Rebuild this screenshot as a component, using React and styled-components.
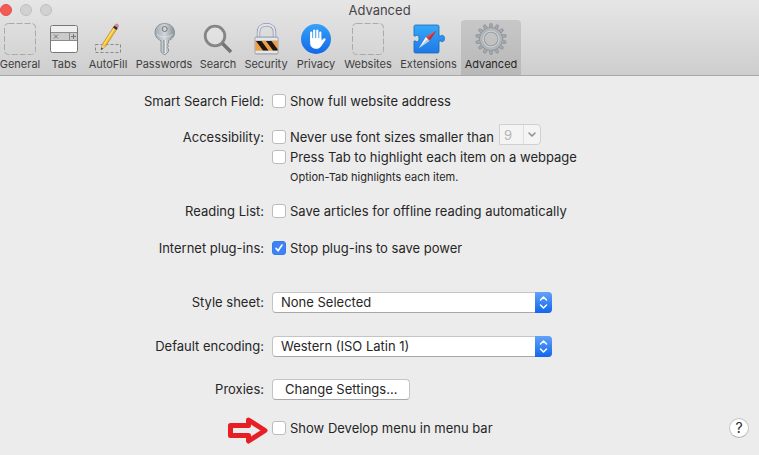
import React, { useState } from "react";
import styled, { createGlobalStyle, css } from "styled-components";

const GlobalStyle = createGlobalStyle`
  *, *::before, *::after { box-sizing: border-box; }
  body {
    margin: 0;
    background: #ececec;
    color: #262626;
    font: 13px/20px Inter, "Liberation Sans", sans-serif;
    overflow-x: hidden;
  }
  button, input, select { font: inherit; color: inherit; margin: 0; }
`;

const Window = styled.main`
  min-height: 100vh;
  background: #ececec;
`;

const Header = styled.header`
  background: linear-gradient(#e7e6e7, #cfcecf);
  border-bottom: 1px solid #a9a8a9;
`;

const TitleBar = styled.div`
  display: grid;
  grid-template-columns: 1fr auto 1fr;
  align-items: center;
  height: 20px;
`;

const Lights = styled.div`
  display: flex;
  gap: 8px;
`;

const Light = styled.button`
  width: 12px;
  height: 12px;
  padding: 0;
  border-radius: 50%;
  border: 1px solid ${(p) => (p.$close ? "#df5149" : "#c0bfc0")};
  background: ${(p) => (p.$close ? "#f25c54" : "#d2d1d2")};
`;

const Title = styled.h1`
  margin: 0;
  font-size: 13px;
  line-height: 20px;
  font-weight: 400;
  color: #464646;
`;

const Tabs = styled.nav`
  display: grid;
  grid-template-columns: 48px 40px 48px 64px 44px 52px 48px 56px 65px 60px;
  height: 55px;
  margin-left: -4px;
`;

const TabButton = styled.button`
  display: flex;
  flex-direction: column;
  align-items: center;
  gap: 1px;
  padding: 3px 0 0;
  border: 0;
  border-radius: 4px 4px 0 0;
  background: none;
  font-size: 11px;
  line-height: 16px;
  white-space: nowrap;
  color: #404040;
  svg { display: block; flex: none; }
  ${(p) =>
    p.$active &&
    css`
      background: linear-gradient(#c8c7c8, #b9b8b9);
      color: #262626;
    `}
`;

const Form = styled.form`
  display: flex;
  flex-direction: column;
  padding-top: 15px;
`;

const Row = styled.div`
  display: grid;
  grid-template-columns: minmax(0, 264fr) minmax(0, 487fr);
  column-gap: 8px;
  margin-bottom: ${(p) => p.$after || 0}px;
`;

const RowLabel = styled.label`
  text-align: right;
  white-space: nowrap;
  line-height: ${(p) => (p.$control ? 21 : 20)}px;
  padding-top: ${(p) => (p.$low ? 3 : 0)}px;
`;

const Stack = styled.div`
  display: flex;
  flex-direction: column;
  align-items: flex-start;
`;

const Line = styled.div`
  display: flex;
  align-items: flex-end;
  gap: 5px;
  height: 23px;
`;

const LastLine = styled.div`
  display: flex;
  justify-content: space-between;
  position: relative;
  padding-right: 10px;
`;

const CheckLabel = styled.label`
  display: flex;
  align-items: center;
  gap: 4px;
  height: 20px;
  white-space: nowrap;
`;

const CheckInput = styled.input`
  appearance: none;
  flex: none;
  width: 14px;
  height: 14px;
  border: 1px solid #bcbcbc;
  border-radius: 3px;
  background: #fff;
  &:checked {
    border-color: #3b7be8;
    background: #3e82f7
      url("data:image/svg+xml,%3Csvg xmlns='http://www.w3.org/2000/svg' viewBox='0 0 12 12'%3E%3Cpath d='M3 6.3 5.1 8.8 9 3' fill='none' stroke='white' stroke-width='1.6' stroke-linecap='round' stroke-linejoin='round'/%3E%3C/svg%3E")
      center / 12px no-repeat;
  }
`;

const Hint = styled.p`
  margin: 0 0 0 18px;
  font-size: 11px;
  line-height: 20px;
`;

const SelectBox = styled.div`
  position: relative;
  width: ${(p) => (p.$small ? 42 : 280)}px;
  height: 21px;
  align-self: flex-start;
  svg {
    position: absolute;
    top: 0;
    right: 0;
    pointer-events: none;
  }
`;

const Select = styled.select`
  appearance: none;
  display: block;
  width: 100%;
  height: 21px;
  padding: 0 24px 1px 8px;
  line-height: 18px;
  border: 1px solid #c4c4c4;
  border-bottom-color: #a8a8a8;
  border-radius: 4px;
  background: #fff;
  &:disabled {
    padding: 0 18px 0 4px;
    border-color: #d0d0d0;
    border-radius: 0 4px 4px 0;
    background: #f4f4f4;
    color: #b5b5b5;
    opacity: 1;
  }
`;

const PushButton = styled.button`
  height: 21px;
  padding: 0 12px 1px;
  line-height: 18px;
  border: 1px solid #c4c4c4;
  border-bottom-color: #a8a8a8;
  border-radius: 4px;
  background: #fff;
`;

const HelpButton = styled.button`
  width: 20px;
  height: 20px;
  padding: 0;
  border: 1px solid #c6c6c6;
  border-bottom-color: #adadad;
  border-radius: 50%;
  background: #fff;
  font-size: 14px;
  line-height: 18px;
`;

const Arrow = styled.svg`
  position: absolute;
  right: 100%;
  top: -1px;
  margin-right: 4px;
`;

const Icon = ({ children }) => (
  <svg width="34" height="32" viewBox="0 0 34 32" aria-hidden="true">
    {children}
  </svg>
);

const EmptyIcon = () => (
  <Icon>
    <rect x="1.5" y=".5" width="31" height="31" rx="4" fill="none" stroke="#aaa" strokeDasharray="6 2" />
  </Icon>
);

const TabsIcon = () => (
  <Icon>
    <rect x="3.5" y="2.5" width="27" height="27" rx="2" fill="#fff" stroke="#777" />
    <path d="M4 5a2 2 0 0 1 2-2h22a2 2 0 0 1 2 2v4H4z" fill="#efefef" />
    <path d="M4 9h26v8H4z" fill="#cbcacb" />
    <path d="M4 9.500h26M4 17.500h26M22.500 9v8" stroke="#8b8b8b" />
    <path d="m7 11.500 4 4m0-4-4 4M24 13.500h5M26.500 11v5" stroke="#777" />
  </Icon>
);

const PencilIcon = () => (
  <Icon>
    <path d="M4.500 21.500h25v8h-25z" fill="none" stroke="#888" strokeDasharray="3 2" />
    <path d="m10 27 1.200-5.500L22.500 4l3.200 2.200L14.500 23.500z" fill="#f5bd2c" stroke="#a77a22" strokeWidth=".6" />
    <path d="M12.800 21.500 23.500 5.200" stroke="#ffe17a" strokeWidth="1.200" />
    <path d="m10 27 1.200-5.500 3.300 2z" fill="#e8c99b" />
    <path d="m10 27 .5-2.500 1.500 1z" fill="#222" />
    <path d="m22 4.600 1.400-2.200 3.600 2.400-1.500 2.200z" fill="#33312f" />
    <path d="m23.400 2.400.8-1.200c1.400-1.600 4.400.4 3.600 2.300L27 4.800z" fill="#d98791" />
  </Icon>
);

const KeyIcon = () => (
  <Icon>
    <defs>
      <linearGradient id="key" x1="0" x2="1">
        <stop offset="0" stopColor="#a4abb0" />
        <stop offset=".5" stopColor="#d1d6d9" />
        <stop offset="1" stopColor="#899197" />
      </linearGradient>
    </defs>
    <path
      d="M17.500.5C11.700.5 8 4.400 8 9.500c0 3.900 2.200 6.600 6 8.200V29l3 2.500h1.500l3-3V26l-1.200-1.300 1.200-1.400-1-1.800 1-1.500v-2.400c3.800-1.600 6-4.300 6-8.100C27.500 4.400 23.400.5 17.500.5Z"
      fill="url(#key)"
      stroke="#7f878c"
      strokeWidth=".8"
    />
    <circle cx="17.700" cy="6" r="2.500" fill="#d4d4d4" stroke="#71797e" />
    <path d="M17 17v13" stroke="#737c82" />
    <path d="M18.300 17v13" stroke="#edf0f1" />
    <path d="M10 11c2 4 13 4 15.500 0" fill="none" stroke="#e1e5e7" strokeWidth=".8" />
  </Icon>
);

const SearchIcon = () => (
  <Icon>
    <circle cx="14" cy="13" r="9.800" fill="#e4e4e4" fillOpacity=".6" stroke="#858585" strokeWidth="2.800" />
    <path d="m21.500 20.500 8.500 8.500" stroke="#757575" strokeWidth="3.600" />
  </Icon>
);

const LockIcon = () => (
  <Icon>
    <path d="M9.500 14.500V9c0-5 3.500-7.300 8-7.300s8 2.300 8 7.300v5.500" fill="none" stroke="#8d95a3" strokeWidth="3.400" />
    <path d="M9.500 14.500V9c0-5 3.500-7.300 8-7.300s8 2.300 8 7.300v5.500" fill="none" stroke="#dfe5f0" strokeWidth="1.900" />
    <rect x="6" y="14" width="23" height="17" rx="1" fill="#c6ccd6" stroke="#8f959f" strokeWidth=".8" />
    <path d="M6.400 18h22.200v9.500H6.400z" fill="#f0a044" />
    <path d="M7 18h5.500l7 9.500H14zM17 18h5.500l6.100 8.300v1.200H24z" fill="#1f1812" />
    <path d="M6.500 16h22M6.500 29h22" stroke="#eef1f6" strokeWidth="1.500" />
  </Icon>
);

const HandIcon = () => (
  <Icon>
    <defs>
      <linearGradient id="hand" x2="0" y2="1">
        <stop offset="0" stopColor="#35a1f8" />
        <stop offset="1" stopColor="#1268e7" />
      </linearGradient>
    </defs>
    <circle cx="17" cy="16" r="15" fill="url(#hand)" />
    <g fill="none" stroke="#fff" strokeLinecap="round" strokeWidth="2.200">
      <path d="M12.200 17V9.500M15.200 16V7.500M18.300 16V7.500M21.300 17V9.500" />
    </g>
    <path d="M11.100 15h11.300v2.800l2.300-2.200c1-.9 2.500.1 1.800 1.300L22 23.500c-1.300 1.700-2.600 2.300-4.800 2.300-4 0-6.100-2.500-6.100-6z" fill="#fff" />
  </Icon>
);

const ExtensionIcon = () => (
  <Icon>
    <defs>
      <linearGradient id="puzzle" x2="0" y2="1">
        <stop offset="0" stopColor="#35a9fa" />
        <stop offset="1" stopColor="#2078e7" />
      </linearGradient>
    </defs>
    <path
      d="M4 2h21.500A1.500 1.500 0 0 1 27 3.500V13h1.500c1-1.200 4-1 4 2.500s-3 3.700-4 2.500H27v10.500a1.500 1.500 0 0 1-1.500 1.500H3.500A1.500 1.500 0 0 1 2 28.500V18h1.500c1.200 1.400 3.500.7 3.500-2.500S4.700 11.600 3.500 13H2V3.500A1.500 1.500 0 0 1 3.500 2z"
      fill="url(#puzzle)"
      stroke="#1767b8"
      strokeWidth=".8"
    />
    <path d="M24.500 7.500 13.800 14l3.700 3.700z" fill="#e74743" />
    <path d="m24.500 7.500-7 10.200-1.800-1.800z" fill="#b82f38" />
    <path d="m7 25 6.800-11 3.700 3.700z" fill="#f8f8f8" />
    <path d="m7 25 8.700-9.100 1.800 1.800z" fill="#bdc6d0" />
  </Icon>
);

const TEETH = 14;

const GearIcon = () => (
  <Icon>
    <g fill="#a3a9ad" stroke="#83898d" strokeWidth=".6">
      {Array.from({ length: TEETH }, (_, i) => (
        <path
          key={i}
          d="m15 5.500.9-4.700q1.100-.6 2.200 0L19 5.500z"
          transform={`rotate(${(i * 360) / TEETH} 17 16)`}
        />
      ))}
    </g>
    <circle cx="17" cy="16" r="9" fill="none" stroke="#8a9094" strokeWidth="5" />
    <circle cx="17" cy="16" r="9" fill="none" stroke="#b0b6ba" strokeWidth="4" />
    <circle cx="17" cy="16" r="8" fill="none" stroke="#cdd2d5" strokeWidth="1" />
  </Icon>
);

const TABS = [
  ["General", EmptyIcon],
  ["Tabs", TabsIcon],
  ["AutoFill", PencilIcon],
  ["Passwords", KeyIcon],
  ["Search", SearchIcon],
  ["Security", LockIcon],
  ["Privacy", HandIcon],
  ["Websites", EmptyIcon],
  ["Extensions", ExtensionIcon],
  ["Advanced", GearIcon],
];

const Check = ({ children, ...rest }) => (
  <CheckLabel>
    <CheckInput type="checkbox" {...rest} />
    {children}
  </CheckLabel>
);

const Popup = ({ id, value }) => (
  <SelectBox>
    <Select id={id} defaultValue={value}>
      <option>{value}</option>
    </Select>
    <svg width="17" height="21" viewBox="0 0 17 21" aria-hidden="true">
      <defs>
        <linearGradient id={`${id}-blue`} x2="0" y2="1">
          <stop offset="0" stopColor="#62a2fa" />
          <stop offset="1" stopColor="#1266ee" />
        </linearGradient>
      </defs>
      <path d="M0 0h13a4 4 0 0 1 4 4v13a4 4 0 0 1-4 4H0z" fill={`url(#${id}-blue)`} />
      <path d="m5.500 8 3-3 3 3m-6 5 3 3 3-3" fill="none" stroke="#fff" strokeWidth="1.500" strokeLinecap="round" strokeLinejoin="round" />
    </svg>
  </SelectBox>
);

export default function App() {
  const [active, setActive] = useState("Advanced");
  return (
    <Window>
      <GlobalStyle />
      <Header>
        <TitleBar>
          <Lights>
            <Light $close aria-label="Close" />
            <Light aria-label="Minimize" />
            <Light aria-label="Zoom" />
          </Lights>
          <Title>Advanced</Title>
        </TitleBar>
        <Tabs aria-label="Preferences">
          {TABS.map(([name, Glyph]) => (
            <TabButton key={name} $active={name === active} onClick={() => setActive(name)}>
              <Glyph />
              {name}
            </TabButton>
          ))}
        </Tabs>
      </Header>
      <Form onSubmit={(e) => e.preventDefault()}>
        <Row $after={13}>
          <RowLabel htmlFor="address">Smart Search Field:</RowLabel>
          <Check id="address">Show full website address</Check>
        </Row>
        <Row $after={14}>
          <RowLabel $low htmlFor="font-limit">Accessibility:</RowLabel>
          <Stack>
            <Line>
              <Check id="font-limit">Never use font sizes smaller than</Check>
              <SelectBox $small>
                <Select disabled aria-label="Minimum font size" defaultValue="9">
                  <option>9</option>
                </Select>
                <svg width="18" height="21" viewBox="0 0 18 21" aria-hidden="true">
                  <path d="M.5 1v19" stroke="#dedede" />
                  <path d="m6 9 3 3 3-3" fill="none" stroke="#8e8e8e" strokeWidth="1.500" strokeLinecap="round" />
                </svg>
              </SelectBox>
            </Line>
            <Check>Press Tab to highlight each item on a webpage</Check>
            <Hint>Option-Tab highlights each item.</Hint>
          </Stack>
        </Row>
        <Row $after={17}>
          <RowLabel htmlFor="offline">Reading List:</RowLabel>
          <Check id="offline">Save articles for offline reading automatically</Check>
        </Row>
        <Row $after={34}>
          <RowLabel htmlFor="plugins">Internet plug-ins:</RowLabel>
          <Check id="plugins" defaultChecked>Stop plug-ins to save power</Check>
        </Row>
        <Row $after={23}>
          <RowLabel $control htmlFor="style">Style sheet:</RowLabel>
          <Popup id="style" value="None Selected" />
        </Row>
        <Row $after={22}>
          <RowLabel $control htmlFor="encoding">Default encoding:</RowLabel>
          <Popup id="encoding" value="Western (ISO Latin 1)" />
        </Row>
        <Row $after={18}>
          <RowLabel $control htmlFor="proxies">Proxies:</RowLabel>
          <Stack>
            <PushButton id="proxies" type="button">Change Settings...</PushButton>
          </Stack>
        </Row>
        <Row>
          <span />
          <LastLine>
            <Arrow width="40" height="27" viewBox="0 0 40 27" aria-hidden="true">
              <path d="M2.500 8.500h18V3L37 13.500 20.500 24v-5.500h-18z" fill="#ececec" stroke="#e81e25" strokeWidth="5" strokeLinejoin="round" />
            </Arrow>
            <Check>Show Develop menu in menu bar</Check>
            <HelpButton type="button" aria-label="Help">?</HelpButton>
          </LastLine>
        </Row>
      </Form>
    </Window>
  );
}
